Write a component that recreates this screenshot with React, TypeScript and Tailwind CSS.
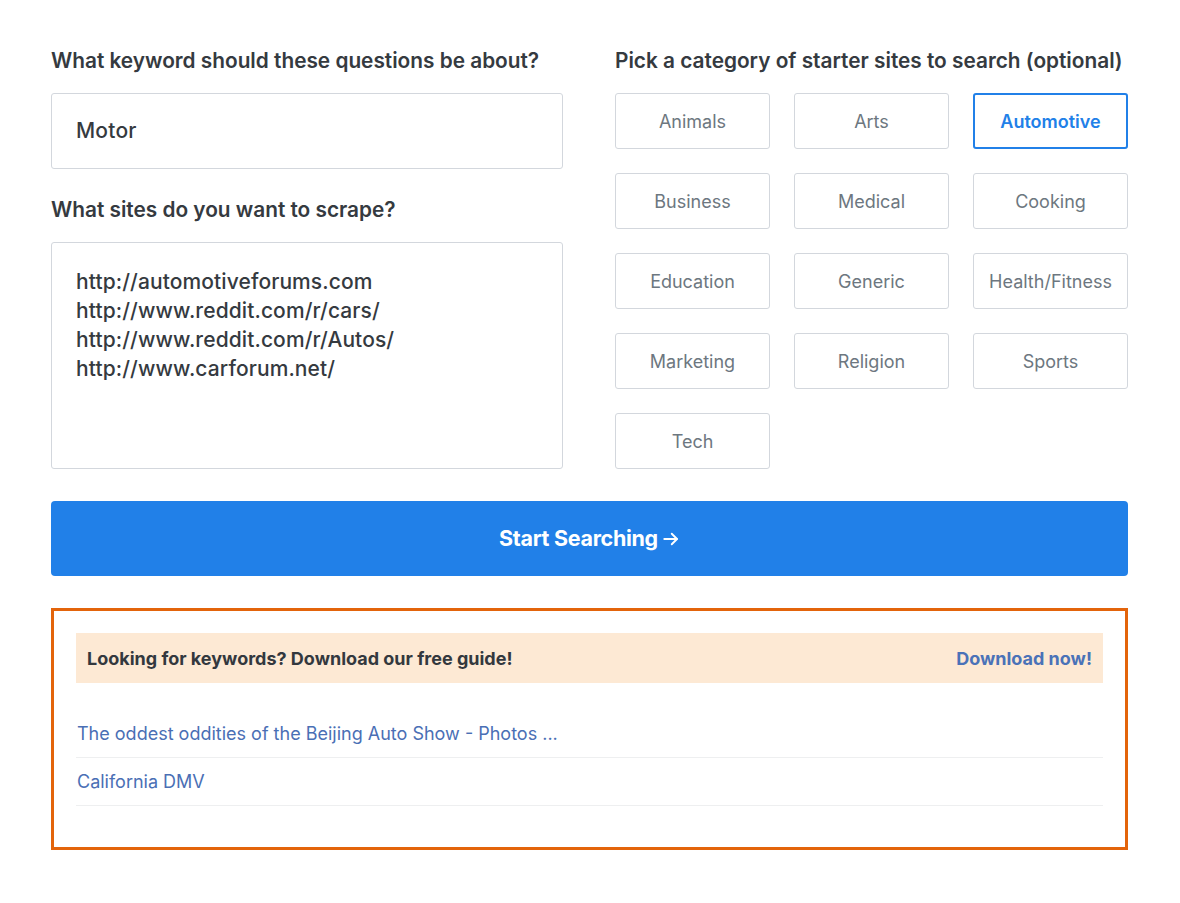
import { useState } from 'react';

const categories = [
  'Animals',
  'Arts',
  'Automotive',
  'Business',
  'Medical',
  'Cooking',
  'Education',
  'Generic',
  'Health/Fitness',
  'Marketing',
  'Religion',
  'Sports',
  'Tech',
];

const sites = [
  'http://automotiveforums.com',
  'http://www.reddit.com/r/cars/',
  'http://www.reddit.com/r/Autos/',
  'http://www.carforum.net/',
];

const results = ['The oddest oddities of the Beijing Auto Show - Photos ...', 'California DMV'];

export default function App() {
  const [active, setActive] = useState('Automotive');

  return (
    <div className="min-h-screen bg-white font-['Inter','Liberation_Sans',sans-serif] text-[#353a40]">
      <div className="ml-[51px] w-[1077px] pt-[47px]">
        <div className="grid grid-cols-[512px_1fr] gap-x-[52px]">
          <div className="flex flex-col">
            <h2 className="text-[20.8px] font-semibold leading-[28px]">
              What keyword should these questions be about?
            </h2>
            <div className="mt-[18px] flex h-[76px] items-center rounded-[3px] border border-[#d3d7dd] px-6 text-[21px] font-medium tracking-[0.2px]">
              Motor
            </div>
            <h2 className="mt-[27px] text-[20.8px] font-semibold leading-[28px]">
              What sites do you want to scrape?
            </h2>
            <div className="mt-[18px] h-[227px] rounded-[3px] border border-[#d3d7dd] px-6 pt-[24px] text-[21px] font-medium leading-[29px] tracking-[0.1px]">
              {sites.map((s) => (
                <div key={s}>{s}</div>
              ))}
            </div>
          </div>

          <div className="flex flex-col">
            <h2 className="text-[20.8px] font-semibold leading-[28px]">
              Pick a category of starter sites to search (optional)
            </h2>
            <div className="mt-[18px] grid grid-cols-3 gap-6">
              {categories.map((c) => (
                <button
                  key={c}
                  onClick={() => setActive(c)}
                  className={`flex h-[56px] items-center justify-center rounded-[3px] text-[18px] ${
                    active === c
                      ? 'border-2 border-[#2180e8] font-semibold text-[#2180e8]'
                      : 'border border-[#d3d7dd] text-[#6d7780]'
                  }`}
                >
                  {c}
                </button>
              ))}
            </div>
          </div>
        </div>

        <button className="mt-8 flex h-[75px] w-full items-center justify-center gap-[4px] rounded-[4px] bg-[#2180e8] text-[21.5px] font-bold tracking-[-0.3px] text-white">
          Start Searching
          <svg width="18" height="18" viewBox="0 0 24 24" fill="none" stroke="currentColor" strokeWidth="2.5" strokeLinecap="round" strokeLinejoin="round">
            <path d="M3 12h17" />
            <path d="M13 5l7 7-7 7" />
          </svg>
        </button>

        <div className="mt-8 border-[3px] border-[#e3640b] px-[22px] pt-[22px] pb-[41px]">
          <div className="flex h-[50px] items-center justify-between bg-[#fde9d4] px-[11px] text-[18px] font-bold">
            <span className="text-[#33383e]">Looking for keywords? Download our free guide!</span>
            <a href="#" className="text-[#4a72b8]">
              Download now!
            </a>
          </div>
          <div className="mt-[27px]">
            {results.map((r) => (
              <div
                key={r}
                className="flex h-[48px] items-center border-b border-[#eeeff0] pl-[1px] text-[18px] text-[#4a6fb5]"
              >
                {r}
              </div>
            ))}
          </div>
        </div>
      </div>
    </div>
  );
}
